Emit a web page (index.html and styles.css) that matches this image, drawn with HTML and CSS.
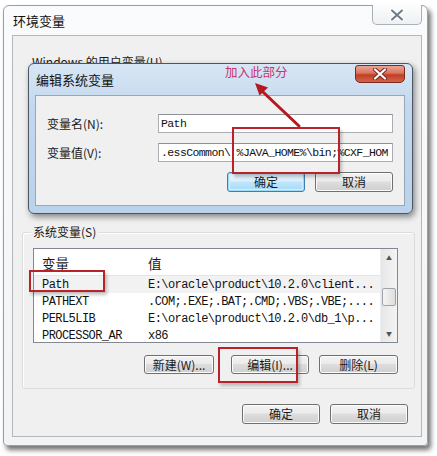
FILE: index.html
```html
<!DOCTYPE html>
<html>
<head>
    <title>环境变量</title>
    <link rel="stylesheet" href="styles.css">
</head>
<body>
    <div class="window">
        <div class="titlebar">
            <span class="title">环境变量</span>
            <div class="close">
                <svg width="14" height="12" viewBox="0 0 14 12"><path d="M2 1.5 L12 10.5 M12 1.5 L2 10.5" stroke="#fff" stroke-width="4.2" stroke-linecap="round"/><path d="M2 1.5 L12 10.5 M12 1.5 L2 10.5" stroke="#6d7a88" stroke-width="2" stroke-linecap="round"/></svg>
            </div>
        </div>
        <div class="client">
            <div class="user-label">Windows 的用户变量(U)</div>
            <div class="group">
                <div class="group-label">系统变量(S)</div>
                <div class="listbox">
                    <div class="list-main">
                        <div class="list-head">
                            <span class="col1">变量</span>
                            <span class="col2">值</span>
                        </div>
                        <div class="row selected">
                            <span class="col1 mono">Path</span>
                            <span class="col2 mono">E:\oracle\product\10.2.0\client...</span>
                        </div>
                        <div class="row">
                            <span class="col1 mono">PATHEXT</span>
                            <span class="col2 mono">.COM;.EXE;.BAT;.CMD;.VBS;.VBE;....</span>
                        </div>
                        <div class="row">
                            <span class="col1 mono">PERL5LIB</span>
                            <span class="col2 mono">E:\oracle\product\10.2.0\db_1\p...</span>
                        </div>
                        <div class="row">
                            <span class="col1 mono">PROCESSOR_AR</span>
                            <span class="col2 mono">x86</span>
                        </div>
                    </div>
                    <div class="scrollbar">
                        <div class="sb-arrow">&#9650;</div>
                        <div class="sb-track">
                            <div class="sb-thumb"></div>
                        </div>
                        <div class="sb-arrow">&#9660;</div>
                    </div>
                </div>
                <div class="btn-row group-btns">
                    <button class="btn btn-new">新建(W)...</button>
                    <button class="btn btn-edit">编辑(I)...</button>
                    <button class="btn btn-del">删除(L)</button>
                </div>
            </div>
            <div class="btn-row footer-btns">
                <button class="btn">确定</button>
                <button class="btn">取消</button>
            </div>
        </div>
    </div>

    <div class="dialog">
        <div class="dialog-titlebar">
            <span class="title">编辑系统变量</span>
            <div class="close-red">
                <svg width="14" height="12" viewBox="0 0 14 12"><path d="M2 1.5 L12 10.5 M12 1.5 L2 10.5" stroke="#7a2a20" stroke-width="4.2" stroke-linecap="round"/><path d="M2 1.5 L12 10.5 M12 1.5 L2 10.5" stroke="#fff" stroke-width="2.2" stroke-linecap="round"/></svg>
            </div>
        </div>
        <div class="dialog-client">
            <div class="field">
                <label for="varname">变量名(N):</label>
                <input type="text" id="varname" value="Path">
            </div>
            <div class="field">
                <label for="varvalue">变量值(V):</label>
                <input type="text" id="varvalue" value=".essCommon\ %JAVA_HOME%\bin;%CXF_HOM">
            </div>
            <div class="btn-row dialog-btns">
                <button class="btn btn-focus">确定</button>
                <button class="btn">取消</button>
            </div>
        </div>
    </div>

    <div class="note">加入此部分</div>
    <svg class="arrow" width="60" height="52" viewBox="0 0 60 52">
        <path d="M54 48 L18 14" stroke="#b5181e" stroke-width="3" stroke-linecap="round"/>
        <path d="M10 5 L23 9.5 L14.5 17.5 Z" fill="#b5181e"/>
    </svg>
    <div class="mark mark-value"></div>
    <div class="mark mark-path"></div>
    <div class="mark mark-edit"></div>
</body>
</html>
```

FILE: styles.css
```css
* {
    margin: 0px;
    padding: 0px;
    box-sizing: border-box;
}
body {
    width: 437px;
    height: 456px;
    overflow: hidden;
    background: #fff;
    font-family: "Noto Sans CJK SC", "Liberation Sans", sans-serif;
    font-size: 12px;
    line-height: 16px;
    color: #1a1a1a;
}
.mono {
    font-family: "Liberation Mono", "Noto Sans CJK SC", monospace;
    font-size: 12px;
    letter-spacing: -0.55px;
    color: #111;
}

/* outer window */
.window {
    margin: 5px 0 0 3px;
    width: 425px;
    height: 441px;
    background: linear-gradient(#fafbfc, #f1f3f5);
    border: 1px solid #9a9fa5;
    border-radius: 6px 6px 4px 4px;
    padding: 0 5px 7px 8px;
    box-shadow: 3px 4px 5px rgba(0, 0, 0, 0.55);
}
.titlebar {
    height: 29px;
    display: flex;
    justify-content: space-between;
    align-items: flex-start;
}
.title {
    font-size: 13px;
    padding: 7px 0 0 1px;
    color: #111;
}
.close {
    width: 50px;
    height: 20px;
    margin-top: -1px;
    border: 1px solid #a9b0b8;
    border-top: none;
    border-radius: 0 0 5px 5px;
    background: linear-gradient(#fdfdfd, #eef0f2);
    display: flex;
    align-items: center;
    justify-content: center;
}
.client {
    height: 402px;
    background: #f0f0f0;
    border: 1px solid #b4b8bd;
    display: flex;
    flex-direction: column;
}
.user-label {
    padding: 18px 0 0 19px;
    height: 34px;
}

/* system variables group */
.group {
    margin: 162px 6px 0 9px;
    height: 157px;
    border: 1px solid #dcdcdc;
    box-shadow: inset 1px 1px 0 #fff;
    border-radius: 3px;
    padding: 0 0 0 10px;
}
.group-label {
    width: fit-content;
    margin: -9px 0 0 -2px;
    padding: 0 2px;
    background: #f0f0f0;
}
.listbox {
    margin-top: 8px;
    width: 365px;
    height: 95px;
    background: #fff;
    border: 1px solid #828790;
    display: flex;
    overflow: hidden;
}
.list-main {
    flex: 1;
}
.list-head {
    height: 27px;
    padding-top: 6px;
    border-bottom: 1px solid #e5e5e5;
    display: flex;
}
.list-head span {
    font-size: 13.5px;
}
.row {
    height: 17px;
    display: flex;
    align-items: center;
}
.row.selected {
    background: #f2f2f2;
}
.col1 {
    width: 106px;
    padding-left: 8px;
}
.col2 {
    padding-left: 8px;
    white-space: nowrap;
}
.scrollbar {
    width: 17px;
    background: linear-gradient(90deg, #e6e6e6, #f4f4f4);
    border-left: 1px solid #eee;
    display: flex;
    flex-direction: column;
}
.sb-arrow {
    height: 17px;
    font-size: 6px;
    line-height: 17px;
    text-align: center;
    color: #555;
}
.sb-track {
    flex: 1;
    padding-top: 22px;
}
.sb-thumb {
    margin: 0 1px;
    height: 18px;
    border: 1px solid #9da3aa;
    border-radius: 2px;
    background: linear-gradient(90deg, #f4f4f4, #dedede);
}

/* buttons */
.btn-row {
    display: flex;
    justify-content: flex-end;
    gap: 10px;
}
.btn {
    height: 20px;
    font-family: "Noto Sans CJK SC", sans-serif;
    font-size: 12px;
    line-height: 16px;
    color: #1a1a1a;
    border: 1px solid #707070;
    border-radius: 3px;
    background: linear-gradient(#f3f3f3 0%, #ebebeb 45%, #dddddd 50%, #cfcfcf 100%);
    box-shadow: inset 0 0 0 1px #fbfbfb;
    width: 78px;
}
.group-btns {
    margin-top: 12px;
    width: 365px;
}
.group-btns .btn {
    height: 19px;
}
.btn-new {
    width: 70px;
    margin-right: 7px;
}
.btn-del {
    width: 79px;
}
.footer-btns {
    margin-top: 15px;
    padding-right: 13px;
}

/* edit dialog */
.dialog {
    position: absolute;
    left: 28px;
    top: 63px;
    width: 385px;
    height: 151px;
    border: 1px solid #4a5663;
    border-radius: 6px;
    background: linear-gradient(#d7e6f4 0%, #c3d8ee 30%, #bad2ea 100%);
    padding: 0 7px 7px 6px;
    box-shadow: 2px 3px 6px rgba(0, 0, 0, 0.45);
}
.dialog-titlebar {
    height: 31px;
    display: flex;
    justify-content: space-between;
    align-items: flex-start;
}
.dialog-titlebar .title {
    padding: 8px 0 0 1px;
}
.close-red {
    width: 50px;
    height: 18px;
    margin-top: 1px;
    border: 1px solid #7a2a20;
    border-radius: 3px 3px 5px 5px;
    background: linear-gradient(#eaa694 0%, #d9745f 45%, #c23d24 55%, #d3644a 100%);
    display: flex;
    align-items: center;
    justify-content: center;
}
.dialog-client {
    height: 111px;
    background: #f0f0f0;
    border: 1px solid #97a7b8;
    padding: 18px 11px 0 11px;
}
.field {
    display: flex;
    align-items: center;
    margin-bottom: 10px;
}
.field label {
    width: 111px;
}
.field input {
    width: 235px;
    height: 19px;
    border: 1px solid #abadb3;
    border-top-color: #8e9198;
    padding: 0 2px;
    font-family: "Liberation Mono", monospace;
    font-size: 11.5px;
    letter-spacing: -0.6px;
    color: #111;
    outline: none;
}
.dialog-btns {
    margin-top: 5px;
    gap: 10px;
}
.dialog-btns .btn {
    width: 78px;
}
.btn-focus {
    border-color: #3c7fb1;
    box-shadow: inset 0 0 0 1px #9fd8f5, inset 0 0 0 2px #d5eefb;
    background: linear-gradient(#eaf6fd 0%, #d9f0fc 45%, #bee6fd 50%, #a7d9f5 100%);
}

/* annotations */
.note {
    position: absolute;
    left: 225px;
    top: 64px;
    font-size: 12.5px;
    color: #c9356e;
}
.arrow {
    position: absolute;
    left: 245px;
    top: 78px;
}
.mark {
    position: absolute;
    border: 2px solid #b8232b;
    box-shadow: 2px 3px 3px rgba(0, 0, 0, 0.22);
}
.mark-value {
    left: 232px;
    top: 127px;
    width: 108px;
    height: 47px;
}
.mark-path {
    left: 29px;
    top: 270px;
    width: 76px;
    height: 22px;
}
.mark-edit {
    left: 218px;
    top: 347px;
    width: 80px;
    height: 36px;
}
```
